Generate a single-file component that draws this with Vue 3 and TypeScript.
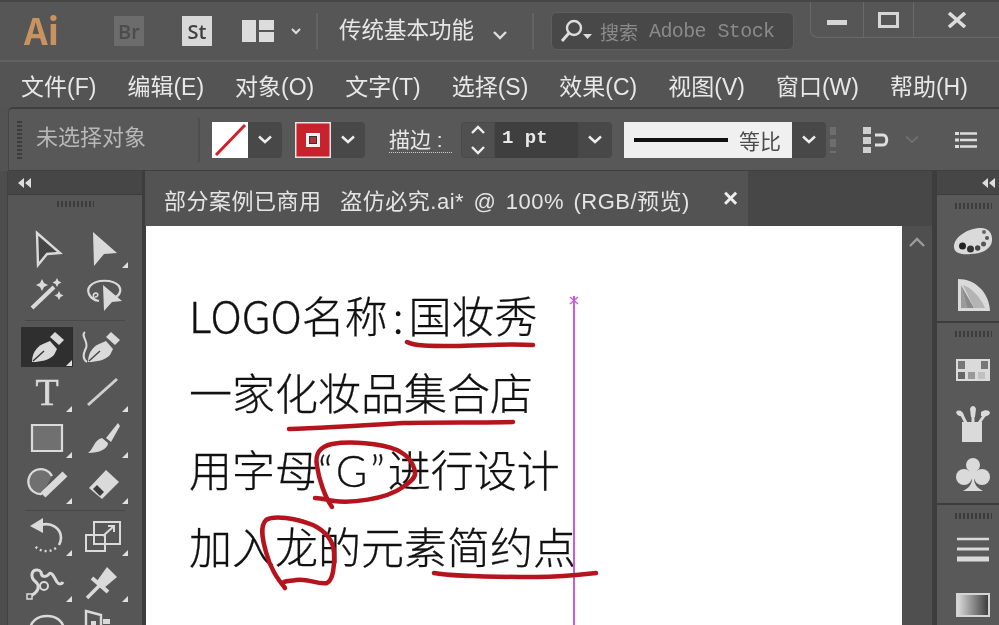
<template>
  <div class="app">
    <!-- 顶部标题栏 -->
    <header class="titlebar">
      <span class="logo">Ai</span>
      <span class="app-btn br">Br</span>
      <span class="app-btn st">St</span>
      <svg class="layout-icon" width="32" height="22" viewBox="0 0 32 22">
        <rect x="0" y="0" width="14" height="22" fill="#dcdcdc" />
        <rect x="17" y="0" width="15" height="10" fill="#dcdcdc" />
        <rect x="17" y="12" width="15" height="10" fill="#dcdcdc" />
      </svg>
      <svg class="chev-small" width="10" height="8" viewBox="0 0 10 8"><path d="M1 2l4 4 4-4" fill="none" stroke="#ddd" stroke-width="2" /></svg>
      <i class="vsep first"></i>
      <span class="workspace-name">传统基本功能</span>
      <svg class="chev-ws" width="14" height="10" viewBox="0 0 14 10"><path d="M1 2l6 6 6-6" fill="none" stroke="#ddd" stroke-width="2.4" /></svg>
      <i class="vsep second"></i>
      <div class="search">
        <svg width="34" height="28" viewBox="0 0 34 28">
          <circle cx="15" cy="11" r="7" fill="none" stroke="#ddd" stroke-width="2.4" />
          <path d="M10 16L3 24" stroke="#ddd" stroke-width="3" />
          <path d="M24 17h9l-4.500 5z" fill="#ddd" />
        </svg>
        <span class="search-cn">搜索</span>
        <span class="search-en">Adobe Stock</span>
      </div>
      <div class="win-btns">
        <span class="win-btn min"><i></i></span>
        <span class="win-btn max"><i></i></span>
        <span class="win-btn close">
          <svg width="20" height="16" viewBox="0 0 20 16"><path d="M2 1l16 14M18 1L2 15" stroke="#ddd" stroke-width="3.600" /></svg>
        </span>
      </div>
    </header>

    <!-- 菜单栏 -->
    <nav class="menubar">
      <span v-for="item in menus" :key="item">{{ item }}</span>
    </nav>

    <!-- 控制栏 -->
    <section class="controlbar">
      <i class="gripper-v"></i>
      <span class="no-select">未选择对象</span>
      <i class="ctl-sep"></i>
      <div class="combo">
        <svg class="swatch" width="36" height="36" viewBox="0 0 36 36">
          <rect width="36" height="36" fill="#fff" />
          <path d="M4 33L33 3" stroke="#d0202a" stroke-width="3" />
        </svg>
        <span class="chev-box"><svg width="14" height="9" viewBox="0 0 14 9"><path d="M1 1.500l6 5.500 6-5.500" fill="none" stroke="#eee" stroke-width="2.400" /></svg></span>
      </div>
      <div class="combo stroke-combo">
        <svg class="swatch" width="36" height="36" viewBox="0 0 36 36">
          <rect width="36" height="36" fill="#e4e4e4" />
          <rect x="1.500" y="1.500" width="33" height="33" fill="#c8232d" />
          <rect x="11" y="11" width="14" height="14" fill="#f2f2f2" />
          <rect x="14.500" y="14.500" width="7" height="7" fill="#b8323a" stroke="#333" />
        </svg>
        <span class="chev-box"><svg width="14" height="9" viewBox="0 0 14 9"><path d="M1 1.500l6 5.500 6-5.500" fill="none" stroke="#eee" stroke-width="2.400" /></svg></span>
      </div>
      <span class="stroke-label">描边 :</span>
      <div class="stroke-width">
        <span class="spinner">
          <svg width="16" height="32" viewBox="0 0 16 32">
            <path d="M2 9l6-6 6 6M2 23l6 6 6-6" fill="none" stroke="#eee" stroke-width="2.400" />
          </svg>
        </span>
        <span class="pt">1 pt</span>
        <span class="chev-box"><svg width="14" height="9" viewBox="0 0 14 9"><path d="M1 1.500l6 5.500 6-5.500" fill="none" stroke="#eee" stroke-width="2.400" /></svg></span>
      </div>
      <div class="profile">
        <i class="profile-line"></i>
        <span class="profile-name">等比</span>
      </div>
      <span class="chev-box profile-chev"><svg width="14" height="9" viewBox="0 0 14 9"><path d="M1 1.500l6 5.500 6-5.500" fill="none" stroke="#eee" stroke-width="2.400" /></svg></span>
      <i class="dots"></i>
      <svg class="align-icon" width="28" height="28" viewBox="0 0 28 28">
        <path d="M1 1h8v7H1zM1 11h8v7H1zM1 21h8v6H1z" fill="#cfcfcf" />
        <path d="M13 9h8c5 0 5 10 0 10h-8" fill="none" stroke="#dedede" stroke-width="3" />
      </svg>
      <svg class="align-chev" width="14" height="9" viewBox="0 0 14 9"><path d="M1 1.500l6 5.500 6-5.500" fill="none" stroke="#6f6f6f" stroke-width="2" /></svg>
      <svg class="list-icon" width="22" height="18" viewBox="0 0 22 18">
        <path d="M0 1h4v3H0zM0 7.500h4v3H0zM0 14h4v3H0z" fill="#ddd" />
        <path d="M5 2.500h17M5 9h17M5 15.500h17" stroke="#ddd" stroke-width="2.400" />
      </svg>
    </section>

    <main class="workspace">
      <div class="edge"></div>

      <!-- 左侧工具栏 -->
      <aside class="tools">
        <div class="panel-head">
          <svg width="14" height="10" viewBox="0 0 14 10"><path d="M6 0v10L0 5zM13 0v10L7 5z" fill="#ddd" /></svg>
        </div>
        <div class="tool-grip"><i class="grip"></i></div>
        <template v-for="(group, g) in toolGroups" :key="g">
          <div class="tool-grid">
            <div v-for="tool in group" :key="tool.name" class="tool" :class="{ active: tool.active }">
              <svg width="56" height="46" viewBox="0 0 56 46">
                <text v-if="tool.label" x="28" y="36" text-anchor="middle" class="tool-t">{{ tool.label }}</text>
                <path
                  v-for="(s, i) in tool.shapes"
                  :key="i"
                  :d="s.d"
                  :fill="s.fill ?? 'none'"
                  :stroke="s.stroke ?? 'none'"
                  :stroke-width="s.w ?? 2"
                  :stroke-dasharray="s.dash"
                />
                <path v-if="tool.corner" d="M53 37v6h-6z" fill="#e0e0e0" />
              </svg>
            </div>
          </div>
          <i v-if="g < toolGroups.length - 1" class="tool-sep"></i>
        </template>
      </aside>

      <!-- 文档区域 -->
      <div class="document">
        <div class="tabbar">
          <div class="tab">
            <span class="tab-title">部分案例已商用&nbsp;&nbsp;盗仿必究.ai* @ 100% (RGB/预览)</span>
            <span class="tab-close">×</span>
          </div>
        </div>
        <div class="doc-body">
          <div class="canvas">
            <p>LOGO名称<span class="colon">:</span>国妆秀</p>
            <p>一家化妆品集合店</p>
            <p>用字母<span class="quoted">“G”</span>进行设计</p>
            <p>加入龙的元素简约点</p>
            <svg class="marks" width="756" height="399" viewBox="146 226 756 399">
              <path d="M574 296V625" stroke="#c75cdc" stroke-width="2" fill="none" />
              <path d="M570 297l8 7M578 297l-8 7" stroke="#c75cdc" stroke-width="1.400" fill="none" />
              <g fill="none" stroke="#b5141d" stroke-width="4.500" stroke-linecap="round" stroke-linejoin="round">
                <path d="M407 342C414 346 430 346 453 346C478 346 505 343 533 345" />
                <path d="M289 429C320 428 370 425 403 423C440 422 485 423 513 422" />
                <path d="M315 498C322 498 327 500 334 501C350 503 385 500 403 487C412 481 416 477 415 472C413 461 407 455 397 450C380 443 350 441 332 444C318 447 315 455 317 466C319 480 325 497 332 507" />
                <path d="M285 588C277 578 270 568 266 552C262 538 260 526 266 520C274 515 295 518 313 525C325 531 333 540 334 552C335 565 333 580 327 583C318 585 308 578 296 580C290 581 287 581 284 582" />
                <path d="M434 573C450 576 500 577 537 577C555 577 578 575 596 573" />
              </g>
            </svg>
          </div>
          <div class="scrollbar">
            <svg width="18" height="10" viewBox="0 0 18 10"><path d="M2 9l7-7 7 7" fill="none" stroke="#9b9b9b" stroke-width="2.400" /></svg>
          </div>
        </div>
      </div>

      <div class="gutter"></div>

      <!-- 右侧面板 -->
      <aside class="dock">
        <div class="panel-head right">
          <svg width="14" height="10" viewBox="0 0 14 10"><path d="M6 0v10L0 5zM13 0v10L7 5z" fill="#ddd" /></svg>
        </div>
        <section v-for="(section, s) in dockSections" :key="s" class="dock-section" :style="{ height: section.height + 'px' }">
          <i class="grip"></i>
          <div v-for="icon in section.icons" :key="icon.name" class="dock-icon">
            <div v-if="icon.name === 'gradient'" class="gradient-icon"></div>
            <svg v-else width="40" height="40" viewBox="0 0 40 40">
              <path
                v-for="(p, i) in icon.shapes"
                :key="i"
                :d="p.d"
                :fill="p.fill ?? 'none'"
                :stroke="p.stroke ?? 'none'"
                :stroke-width="p.w ?? 2"
              />
            </svg>
          </div>
        </section>
      </aside>
    </main>
  </div>
</template>

<script setup lang="ts">
interface Shape {
  d: string
  fill?: string
  stroke?: string
  w?: number
  dash?: string
}

interface Tool {
  name: string
  shapes: Shape[]
  label?: string
  corner?: boolean
  active?: boolean
}

const LIGHT = '#dadada'
const MID = '#707070'

const menus = ['文件(F)', '编辑(E)', '对象(O)', '文字(T)', '选择(S)', '效果(C)', '视图(V)', '窗口(W)', '帮助(H)']

const penBody = 'M13 39C13 31 17 24 24 21L31 18L38 26L35 32C30 37 22 39 13 39Z'
const penCap = 'M31 14L36 9L45 17L40 22Z'

const toolGroups: Tool[][] = [
  [
    { name: 'select', shapes: [{ d: 'M18 8L41 28L28 29L19 40Z', fill: '#454545', stroke: LIGHT, w: 2.4 }] },
    { name: 'direct', corner: true, shapes: [{ d: 'M18 7L42 28L29 29L19 41Z', fill: LIGHT }] },
    {
      name: 'wand',
      shapes: [
        { d: 'M13 37L35 16', stroke: LIGHT, w: 4 },
        { d: 'M23 8l2 4 4 2-4 2-2 4-2-4-4-2 4-2z', fill: LIGHT },
        { d: 'M38 7l1.500 3 3 1.500-3 1.500-1.500 3-1.500-3-3-1.500 3-1.500z', fill: LIGHT },
        { d: 'M40 20l1.500 3 3 1.500-3 1.500-1.500 3-1.500-3-3-1.500 3-1.500z', fill: LIGHT },
      ],
    },
    {
      name: 'lasso',
      shapes: [
        { d: 'M24 30C14 28 11 20 15 15C21 8 38 8 44 15C47 20 44 25 40 26', stroke: LIGHT, w: 2.2 },
        { d: 'M21 30C17 26 18 22 21 22C24 23 23 26 20 26', stroke: LIGHT, w: 1.6 },
        { d: 'M28 14L47 30L37 31L29 40Z', fill: LIGHT },
      ],
    },
  ],
  [
    {
      name: 'pen',
      active: true,
      corner: true,
      shapes: [
        { d: penBody, fill: LIGHT },
        { d: penCap, fill: LIGHT },
        { d: 'M14 38L25 28', stroke: '#333', w: 1.4 },
      ],
    },
    {
      name: 'curvature',
      shapes: [
        { d: penBody, fill: LIGHT },
        { d: penCap, fill: LIGHT },
        { d: 'M14 38L25 28', stroke: '#444', w: 1.4 },
        { d: 'M10 9C5 12 14 19 11 25C8 31 7 36 12 39', stroke: LIGHT, w: 2 },
      ],
    },
    { name: 'type', label: 'T', corner: true, shapes: [] },
    { name: 'line', corner: true, shapes: [{ d: 'M13 36L42 10', stroke: '#cfcfcf', w: 3 }] },
    { name: 'rect', corner: true, shapes: [{ d: 'M13 10H43V36H13Z', fill: MID, stroke: LIGHT, w: 2.2 }] },
    {
      name: 'brush',
      corner: true,
      shapes: [
        { d: 'M31 23L43 8L45 11L36 27Z', fill: LIGHT },
        { d: 'M13 38C18 35 19 25 27 23L33 28C33 34 24 38 13 38Z', fill: LIGHT },
      ],
    },
    {
      name: 'shaper',
      corner: true,
      shapes: [
        { d: 'M23 33A12.500 12.500 0 1 1 33 15', fill: MID, stroke: LIGHT, w: 2.2 },
        { d: 'M24 34L46 13', stroke: LIGHT, w: 7 },
      ],
    },
    {
      name: 'eraser',
      corner: true,
      shapes: [
        { d: 'M14 27L31 9L44 21L27 38Z', fill: LIGHT },
        { d: 'M18 28L22 24L29 31L25 35Z', fill: '#3c3c3c' },
      ],
    },
  ],
  [
    {
      name: 'rotate',
      corner: true,
      shapes: [
        { d: 'M22 12C32 9 42 15 42 25C42 28 41 30 40 32', stroke: LIGHT, w: 2.6 },
        { d: 'M11 13L24 5V20Z', fill: LIGHT },
        { d: 'M37 35C30 40 20 39 15 32', stroke: LIGHT, w: 2.4, dash: '2 3' },
      ],
    },
    {
      name: 'scale',
      corner: true,
      shapes: [
        { d: 'M19 9H45V31H19Z', stroke: LIGHT, w: 2 },
        { d: 'M11 22H30V38H11Z', stroke: LIGHT, w: 2 },
        { d: 'M28 23L39 13M33 13H39V19', stroke: LIGHT, w: 2 },
      ],
    },
    {
      name: 'puppet',
      corner: true,
      shapes: [
        { d: 'M10 38C18 34 20 30 19 26C18 22 12 22 13 15C14 10 20 10 22 13C22 19 28 18 30 15C33 12 36 20 38 23C40 26 43 25 44 23', stroke: LIGHT, w: 3 },
        { d: 'M25 27m-4 0a4 4 0 1 0 8 0a4 4 0 1 0-8 0', fill: '#565656', stroke: LIGHT, w: 2 },
        { d: 'M8 35h5v5H8z', fill: '#565656', stroke: LIGHT, w: 1.5 },
      ],
    },
    {
      name: 'pin',
      corner: true,
      shapes: [
        { d: 'M22 22L32 8L42 18L29 29Z', fill: LIGHT },
        { d: 'M17 19L33 33', stroke: LIGHT, w: 4 },
        { d: 'M24 27L12 39', stroke: LIGHT, w: 3.5 },
      ],
    },
    {
      name: 'symbol',
      shapes: [
        { d: 'M11 26C11 16 19 11 28 11C37 11 45 16 45 26', stroke: LIGHT, w: 2.4 },
        { d: 'M17 26h22', stroke: LIGHT, w: 6, dash: '2 2' },
      ],
    },
    {
      name: 'graph',
      shapes: [
        { d: 'M11 6L26 10V40H11Z', stroke: LIGHT, w: 2.4 },
        { d: 'M16 16h5v5h-5zM28 14h7v5h-7z', fill: LIGHT },
      ],
    },
  ],
]

const dockSections: { height: number; icons: { name: string; shapes: Shape[] }[] }[] = [
  {
    height: 128,
    icons: [
      {
        name: 'palette',
        shapes: [
          {
            d: 'M1 25C1 15 14 7 26 6C35 5 40 11 39 19C38 28 27 32 18 32C8 33 1 31 1 25Z',
            fill: LIGHT,
          },
          { d: 'M6 24a3.500 3.500 0 1 0 7 0a3.500 3.500 0 1 0-7 0z', fill: '#222' },
          { d: 'M14 27a3.500 3.500 0 1 0 7 0a3.500 3.500 0 1 0-7 0z', fill: '#333' },
          { d: 'M22 26a2.700 2.700 0 1 0 5.400 0a2.700 2.700 0 1 0-5.400 0z', fill: '#444' },
          { d: 'M28 22a2.500 2.500 0 1 0 5 0a2.500 2.500 0 1 0-5 0z', fill: '#555' },
          { d: 'M32 16a2 2 0 1 0 4 0a2 2 0 1 0-4 0z', fill: '#555' },
          { d: 'M29 10a2 2 0 1 0 4 0a2 2 0 1 0-4 0z', fill: '#666' },
        ],
      },
      {
        name: 'guide',
        shapes: [
          { d: 'M5 4C22 4 36 17 37 36H5Z', fill: LIGHT },
          { d: 'M8 10L8 33H14Z', fill: '#9a9a9a' },
          { d: 'M8 10L14 33H21Z', fill: '#8a8a8a' },
          { d: 'M10 10C18 12 28 23 32 33H21Z', fill: '#b4b4b4' },
        ],
      },
    ],
  },
  {
    height: 182,
    icons: [
      {
        name: 'swatches',
        shapes: [
          { d: 'M3 9H37V31H3Z', fill: LIGHT },
          { d: 'M5 11h7v8H5zM28 11h7v8h-7z', fill: '#777' },
          { d: 'M5 22h7v7H5z', fill: '#666' },
          { d: 'M15 22h7v7h-7z', fill: '#999' },
          { d: 'M25 22h7v7h-7z', fill: '#c0c0c0' },
        ],
      },
      {
        name: 'brushes',
        shapes: [
          { d: 'M9 19H29V39H9Z', fill: LIGHT },
          { d: 'M13 20L8 10M20 20V5M26 20L33 10', stroke: LIGHT, w: 3 },
          { d: 'M3 9C6 6 10 8 11 13C7 14 4 13 3 9Z', fill: LIGHT },
          { d: 'M17 6C18 2 22 2 23 6L22 14H18Z', fill: LIGHT },
          { d: 'M28 9C32 6 37 7 37 10C36 13 32 14 28 13Z', fill: LIGHT },
        ],
      },
      {
        name: 'club',
        shapes: [
          { d: 'M13 9a7 7 0 1 0 14 0a7 7 0 1 0-14 0z', fill: LIGHT },
          { d: 'M3 21a8 8 0 1 0 16 0a8 8 0 1 0-16 0z', fill: LIGHT },
          { d: 'M21 21a8 8 0 1 0 16 0a8 8 0 1 0-16 0z', fill: LIGHT },
          { d: 'M16 14h8v9h-8z', fill: LIGHT },
          { d: 'M19 22h2c0 6 3 10 9 13H10c6-3 9-7 9-13z', fill: LIGHT },
        ],
      },
    ],
  },
  {
    height: 130,
    icons: [
      {
        name: 'stroke',
        shapes: [
          { d: 'M4 7H36', stroke: LIGHT, w: 2.5 },
          { d: 'M4 17H36', stroke: LIGHT, w: 3 },
          { d: 'M4 27H36', stroke: LIGHT, w: 5 },
        ],
      },
      { name: 'gradient', shapes: [] },
    ],
  },
]
</script>

<style scoped>
.app {
  width: 999px;
  height: 625px;
  overflow: hidden;
  display: flex;
  flex-direction: column;
  background: #535353;
  color: #e0e0e0;
  font-family: "Liberation Sans", "Noto Sans CJK SC", sans-serif;
  filter: blur(0.5px);
}

.titlebar {
  height: 62px;
  flex: none;
  display: flex;
  align-items: center;
  padding-left: 24px;
  box-sizing: border-box;
  background: #565656;
  border-top: 2px solid #474747;
  border-bottom: 2px solid #616161;
}

.logo {
  width: 90px;
  margin-top: -4px;
  font-family: "Noto Sans CJK SC", sans-serif;
  font-size: 37px;
  font-weight: 700;
  line-height: 1;
  color: #c8935f;
}

.app-btn {
  width: 30px;
  height: 30px;
  display: flex;
  align-items: center;
  justify-content: center;
  font-family: "Open Sans", sans-serif;
  font-size: 20px;
  font-weight: 600;
}

.br {
  background: #6c6c6c;
  color: #4c4c4c;
  margin-right: 38px;
}

.st {
  background: #d8d8d8;
  color: #404040;
  margin-right: 30px;
}

.chev-small {
  margin-left: 17px;
}

.vsep {
  width: 2px;
  height: 36px;
  background: #636363;
}

.vsep.first {
  margin: 0 21px 0 15px;
}

.vsep.second {
  margin: 0 17px 0 25px;
}

.workspace-name {
  font-size: 22.500px;
  line-height: 26px;
  margin-top: -1px;
  color: #e6e6e6;
  width: 135px;
  white-space: nowrap;
}

.chev-ws {
  margin-left: 19px;
  margin-top: 8px;
}

.search {
  width: 243px;
  height: 38px;
  box-sizing: border-box;
  display: flex;
  align-items: center;
  padding-left: 7px;
  background: #484848;
  border: 1px solid #5e5e5e;
  border-radius: 6px;
  color: #8a8a8a;
}

.search-cn {
  font-size: 19px;
  margin-left: 7px;
}

.search-en {
  margin-left: 11px;
  font-family: "Liberation Mono", monospace;
  font-size: 20px;
  letter-spacing: -0.6px;
}

.win-btns {
  position: relative;
  margin: -22px 0 0 16px;
  width: 189px;
  height: 36px;
  box-sizing: border-box;
  display: flex;
  border-left: 1px solid #696969;
  border-bottom: 1px solid #696969;
  border-bottom-left-radius: 8px;
}

.win-btn {
  display: flex;
  align-items: center;
  justify-content: center;
}

.min {
  width: 53px;
  border-right: 1px solid #696969;
}

.min i {
  width: 20px;
  height: 5px;
  margin-top: 6px;
  background: #d6d6d6;
}

.max {
  width: 50px;
  border-right: 1px solid #696969;
}

.max i {
  width: 15px;
  height: 10px;
  border: 3px solid #d6d6d6;
}

.close {
  width: 86px;
}

.menubar {
  height: 45px;
  flex: none;
  display: flex;
  align-items: center;
  gap: 31px;
  padding-left: 21px;
  background: #545454;
  font-size: 23px;
  color: #e8e8e8;
  white-space: nowrap;
}

.controlbar {
  height: 64px;
  flex: none;
  box-sizing: border-box;
  margin-left: 8px;
  display: flex;
  align-items: center;
  background: #585858;
  border-top: 2px solid #3f3f3f;
  border-left: 1px solid #474747;
  border-top-left-radius: 5px;
  border-bottom: 1px solid #404040;
}

.gripper-v {
  width: 5px;
  height: 38px;
  margin-left: 8px;
  background: repeating-linear-gradient(#3c3c3c 0 2px, transparent 2px 4px);
}

.no-select {
  margin: -4px 0 0 14px;
  width: 112px;
  font-size: 22px;
  line-height: 26px;
  color: #b8b8b8;
  white-space: nowrap;
}

.ctl-sep {
  width: 2px;
  height: 44px;
  margin: 0 12px 0 50px;
  background: #4e4e4e;
}

.combo {
  display: flex;
  align-items: center;
}

.stroke-combo {
  margin-left: 13px;
}

.swatch {
  display: block;
}

.chev-box {
  width: 34px;
  height: 36px;
  display: flex;
  align-items: center;
  justify-content: center;
  background: #484848;
  border-radius: 0 4px 4px 0;
}

.stroke-label {
  margin-left: 24px;
  width: 63px;
  font-size: 21px;
  color: #e8e8e8;
  white-space: nowrap;
  border-bottom: 1px dotted #ccc;
  line-height: 25px;
}

.stroke-width {
  margin-left: 9px;
  height: 36px;
  display: flex;
  align-items: center;
}

.spinner {
  width: 34px;
  height: 36px;
  display: flex;
  align-items: center;
  justify-content: center;
  background: #505050;
  border: 1px solid #4a4a4a;
  border-radius: 4px 0 0 4px;
  box-sizing: border-box;
}

.pt {
  width: 83px;
  height: 36px;
  line-height: 32px;
  box-sizing: border-box;
  padding-left: 7px;
  background: #3f3f3f;
  font-family: "Liberation Mono", monospace;
  font-size: 19px;
  font-weight: 700;
  color: #e8e8e8;
}

.profile {
  margin-left: 12px;
  width: 168px;
  height: 36px;
  box-sizing: border-box;
  display: flex;
  align-items: center;
  padding-left: 10px;
  background: #f0f0f0;
}

.profile-line {
  width: 94px;
  height: 4px;
  background: #111;
}

.profile-name {
  margin-left: 11px;
  font-size: 21px;
  color: #4c4c4c;
}

.dots {
  width: 6px;
  height: 26px;
  margin-left: 4px;
  background: repeating-linear-gradient(#6e6e6e 0 8px, transparent 8px 12px);
}

.align-icon {
  margin-left: 26px;
}

.align-chev {
  margin-left: 15px;
}

.list-icon {
  margin-left: 36px;
}

.workspace {
  flex: 1;
  min-height: 0;
  display: flex;
  background: #3d3d3d;
}

.edge {
  width: 8px;
  flex: none;
  background: #4d4d4d;
  border-right: 1px solid #414141;
  box-sizing: border-box;
}

.tools {
  width: 134px;
  flex: none;
  background: #565656;
}

.panel-head {
  height: 24px;
  display: flex;
  align-items: center;
  padding-left: 10px;
  background: #464646;
  border-bottom: 1px solid #3c3c3c;
  box-sizing: border-box;
}

.panel-head.right {
  justify-content: flex-end;
  padding: 0 3px 0 0;
}

.tool-grip {
  height: 30px;
  display: flex;
  justify-content: center;
  padding-top: 6px;
  box-sizing: border-box;
}

.grip {
  display: block;
  width: 37px;
  height: 6px;
  background: repeating-linear-gradient(90deg, #3c3c3c 0 2px, transparent 2px 4px);
}

.tool-grid {
  display: grid;
  grid-template-columns: 56px 56px;
  grid-auto-rows: 46px;
  padding-left: 11px;
}

.tool {
  position: relative;
  height: 46px;
}

.tool svg {
  display: block;
}

.tool.active {
  background: linear-gradient(#2f2f2f, #2f2f2f) 2px 4px / 52px 40px no-repeat;
}

.tool-t {
  font-family: "Liberation Serif", serif;
  font-size: 38px;
  fill: #dadada;
  stroke: #dadada;
  stroke-width: 0.6px;
}

.tool-sep {
  display: block;
  height: 1px;
  margin: 3px 17px 2px;
  background: #484848;
}

.document {
  width: 787px;
  margin-left: 3px;
  flex: none;
  display: flex;
  flex-direction: column;
}

.tabbar {
  height: 55px;
  flex: none;
  background: #474747;
}

.tab {
  width: 603px;
  height: 55px;
  display: flex;
  align-items: center;
  padding-left: 19px;
  box-sizing: border-box;
  background: #535353;
}

.tab-title {
  width: 559px;
  font-size: 22px;
  letter-spacing: 0.5px;
  word-spacing: 2.800px;
  color: #e4e4e4;
  white-space: nowrap;
}

.tab-close {
  font-size: 26px;
  font-weight: 700;
  color: #eee;
}

.doc-body {
  flex: 1;
  min-height: 0;
  display: flex;
}

.canvas {
  position: relative;
  margin-left: 1px;
  width: 756px;
  flex: none;
  box-sizing: border-box;
  padding: 50px 0 0 43px;
  background: #fff;
  overflow: hidden;
}

.canvas p {
  margin: 0;
  height: 77px;
  line-height: 77px;
  font-family: "Noto Sans CJK SC", "Noto Sans", sans-serif;
  font-size: 43px;
  font-weight: 300;
  color: #111;
  -webkit-text-stroke: 0.3px #111;
  white-space: nowrap;
}

.colon {
  padding: 0 5px;
}

.quoted {
  font-family: "Lato", sans-serif;
  letter-spacing: 3px;
}

.marks {
  position: absolute;
  left: 0;
  top: 0;
}

.scrollbar {
  flex: 1;
  display: flex;
  justify-content: center;
  padding-top: 11px;
  box-sizing: border-box;
  background: #4f4f4f;
}

.gutter {
  width: 5px;
  flex: none;
  background: #3d3d3d;
}

.dock {
  flex: 1;
  background: #595959;
}

.dock-section {
  box-sizing: border-box;
  padding: 8px 0 0 10px;
  border-bottom: 2px solid #3d3d3d;
  display: flex;
  flex-direction: column;
  align-items: center;
}

.dock-section .grip {
  margin-bottom: 6px;
}

.dock-icon {
  height: 53px;
  display: flex;
  align-items: center;
  justify-content: center;
}

.gradient-icon {
  width: 30px;
  height: 20px;
  border: 2px solid #d4d4d4;
  background: linear-gradient(90deg, #d8d8d8, #3f3f3f);
}
</style>

<style>
html,
body {
  margin: 0;
  background: #535353;
}
</style>
